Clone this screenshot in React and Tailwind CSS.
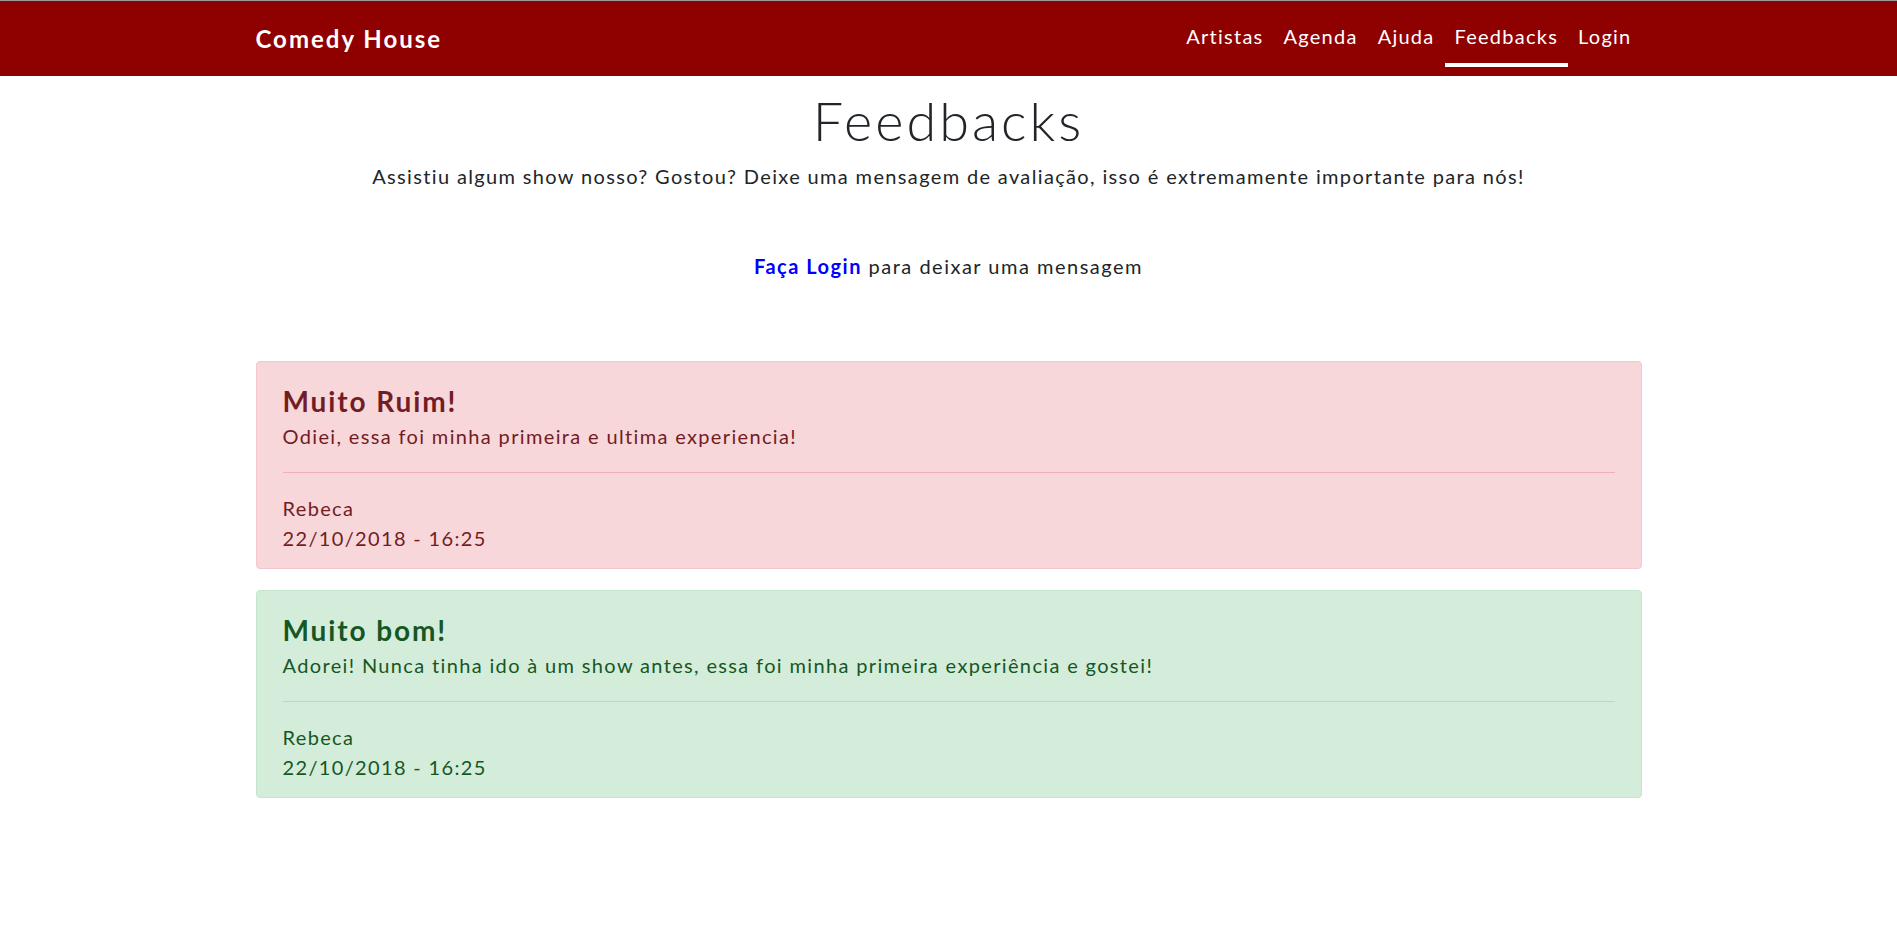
export default function App() {
  const links = ["Artistas", "Agenda", "Ajuda", "Feedbacks", "Login"];
  return (
    <div className="min-h-[938px] bg-white text-[#212529] font-['Lato','Noto_Sans',sans-serif]">
      <nav className="h-[76px] bg-[#8f0000] border-t border-[#9a9a9a]">
        <div className="w-[1386px] mx-auto h-full flex items-center justify-between">
          <a className="text-white font-bold text-[24px] tracking-[2px] mt-[1px]">Comedy House</a>
          <ul className="flex items-center h-full">
            {links.map((l) => (
              <li key={l} className="relative h-full flex items-center">
                <a className="px-[10px] text-white text-[20px] tracking-[1.25px] -mt-[5px]">{l}</a>
                {l === "Feedbacks" && (
                  <span className="absolute left-0 right-0 bottom-[9px] h-[4px] bg-white" />
                )}
              </li>
            ))}
          </ul>
        </div>
      </nav>
      <main className="w-[1386px] mx-auto">
        <div className="text-center">
          <h1 className="text-[54px] font-light leading-[1.2] tracking-[3px] mt-[13px]">Feedbacks</h1>
          <p className="text-[20px] leading-[30px] tracking-[1.35px] mt-[7px]">
            Assistiu algum show nosso? Gostou? Deixe uma mensagem de avaliação, isso é extremamente importante para nós!
          </p>
          <p className="text-[20px] leading-[30px] tracking-[1.5px] mt-[60px]">
            <a className="text-[#0000ff] font-bold">Faça Login</a> para deixar uma mensagem
          </p>
        </div>
        <div className="mt-[80px] flex flex-col gap-[21px]">
          {[
            {
              t: "Muito Ruim!",
              b: "Odiei, essa foi minha primeira e ultima experiencia!",
              c: "bg-[#f8d7da] border-[#f5c6cb] text-[#721c24]",
              hr: "border-[#f1b0b7]",
            },
            {
              t: "Muito bom!",
              b: "Adorei! Nunca tinha ido à um show antes, essa foi minha primeira experiência e gostei!",
              c: "bg-[#d4edda] border-[#c3e6cb] text-[#155724]",
              hr: "border-[#b1dfbb]",
            },
          ].map((f) => (
            <div key={f.t} className={`border rounded-[4px] px-[26px] pt-[22px] pb-[15px] ${f.c}`}>
              <h3 className="text-[28px] font-bold leading-[34px] tracking-[1.9px]">{f.t}</h3>
              <p className="text-[20px] leading-[30px] tracking-[1.35px] mt-[3px]">{f.b}</p>
              <hr className={`mt-[21px] mb-[20px] border-t ${f.hr}`} />
              <p className="text-[20px] leading-[30px] tracking-[1.35px]">Rebeca</p>
              <p className="text-[20px] leading-[30px] tracking-[1.35px]">22/10/2018 - 16:25</p>
            </div>
          ))}
        </div>
      </main>
    </div>
  );
}
